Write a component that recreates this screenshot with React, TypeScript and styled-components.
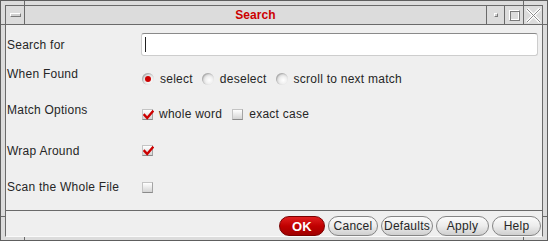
import React from "react";
import styled, { createGlobalStyle } from "styled-components";

const Global = createGlobalStyle`
  html, body { margin: 0; padding: 0; background: #dcdcdc; }
  body { font-family: "Liberation Sans", Arial, sans-serif; }
`;

const Window = styled.div`
  position: relative;
  width: 548px;
  height: 241px;
  box-sizing: border-box;
  border: 1px solid #5e5e5e;
  background: #dcdcdc;
  padding: 4px 4px 3px;
  display: flex;
`;

const Tick = styled.span<{ $x: number; $y: number; $w: number; $h: number }>`
  position: absolute;
  left: ${(p) => p.$x}px;
  top: ${(p) => p.$y}px;
  width: ${(p) => p.$w}px;
  height: ${(p) => p.$h}px;
  background: #6a6a6a;
`;

const Inner = styled.div`
  flex: 1;
  min-width: 0;
  display: flex;
  flex-direction: column;
  border: 1px solid #6a6a6a;
  border-bottom-color: #fafafa;
`;

const TitleBar = styled.div`
  height: 18px;
  display: flex;
  background: #dcdcdc;
  border-bottom: 1px solid #6a6a6a;
`;

const TitleButton = styled.div<{ $w: number; $side: "left" | "right" }>`
  width: ${(p) => p.$w}px;
  flex: none;
  display: flex;
  align-items: center;
  justify-content: center;
  ${(p) => (p.$side === "left" ? "border-right" : "border-left")}: 1px solid #6a6a6a;
`;

const MenuBar = styled.span`
  width: 9px;
  height: 2px;
  border-top: 1px solid #ffffff;
  border-left: 1px solid #ffffff;
  border-bottom: 1px solid #7a7a7a;
  border-right: 1px solid #7a7a7a;
  background: #d0d0d0;
`;

const MinDot = styled.span`
  width: 2px;
  height: 2px;
  border-top: 1px solid #ffffff;
  border-left: 1px solid #ffffff;
  border-bottom: 1px solid #7a7a7a;
  border-right: 1px solid #7a7a7a;
  background: #d0d0d0;
`;

const MaxBox = styled.span`
  width: 9px;
  height: 9px;
  border-top: 1px solid #ffffff;
  border-left: 1px solid #ffffff;
  border-bottom: 1px solid #7a7a7a;
  border-right: 1px solid #7a7a7a;
  box-shadow: inset 1px 1px 0 #7a7a7a, inset -1px -1px 0 #ffffff;
`;

const TitleText = styled.div`
  flex: 1;
  display: flex;
  align-items: center;
  justify-content: center;
  color: #cc0000;
  font-weight: bold;
  font-size: 12px;
  letter-spacing: 0.1px;
`;

const Content = styled.div`
  flex: 1;
  display: flex;
  flex-direction: column;
  background: #efefef;
`;

const Form = styled.div`
  flex: 1;
  padding: 6px 4px 0 1px;
`;

const Row = styled.div<{ $h: number }>`
  height: ${(p) => p.$h}px;
  display: grid;
  grid-template-columns: 134px 1fr;
  align-items: center;
`;

const Label = styled.div<{ $lift?: number }>`
  font-size: 12px;
  letter-spacing: 0.25px;
  color: #262626;
  margin-bottom: ${(p) => p.$lift ?? 0}px;
`;

const Field = styled.div`
  height: 23px;
  box-sizing: border-box;
  background: #ffffff;
  border: 1px solid #cdcdcd;
  border-top-color: #8a8a8a;
  border-radius: 3px;
  display: flex;
  align-items: center;
  padding-left: 3px;
`;

const Caret = styled.span`
  width: 1px;
  height: 15px;
  background: #222;
`;

const Group = styled.div<{ $gap: number }>`
  display: flex;
  align-items: center;
  gap: ${(p) => p.$gap}px;
  padding-left: 1px;
`;

const Option = styled.label`
  display: flex;
  align-items: center;
  gap: 6px;
  font-size: 12px;
  letter-spacing: 0.25px;
  color: #262626;
`;

const Radio = styled.span<{ $on?: boolean }>`
  width: 12px;
  height: 12px;
  border-radius: 50%;
  box-sizing: border-box;
  background: radial-gradient(circle at 60% 60%, #ffffff 0%, #f0f0f0 35%, #cacaca 75%, #8e8e8e 100%);
  box-shadow: inset 1px 1px 1px rgba(0, 0, 0, 0.18);
  display: flex;
  align-items: center;
  justify-content: center;
  &::after {
    content: "";
    width: 6px;
    height: 6px;
    border-radius: 50%;
    background: #cc0000;
    display: ${(p) => (p.$on ? "block" : "none")};
  }
`;

const Box = styled.span`
  position: relative;
  width: 11px;
  height: 11px;
  box-sizing: border-box;
  border: 1px solid #c4c4c4;
  border-bottom-color: #8a8a8a;
  border-right-color: #a4a4a4;
  background: linear-gradient(#ffffff, #d4d4d4);
  display: block;
  flex: none;
`;

const CheckMark = styled.svg`
  position: absolute;
  left: 0;
  top: 0;
`;

const ButtonBar = styled.div`
  height: 25px;
  border-top: 1px solid #6a6a6a;
  display: flex;
  justify-content: flex-end;
  align-items: flex-end;
  gap: 3px;
  padding-right: 1px;
`;

const Button = styled.button<{ $w: number; $primary?: boolean }>`
  width: ${(p) => p.$w}px;
  height: 20px;
  box-sizing: border-box;
  margin: 0;
  padding: 0;
  border-radius: 10px;
  border: 1px solid ${(p) => (p.$primary ? "#7a0000" : "#858585")};
  background: ${(p) =>
    p.$primary
      ? "linear-gradient(#e02020 0%, #c00000 50%, #a00000 100%)"
      : "linear-gradient(#fbfbfb 0%, #ececec 50%, #cfcfcf 100%)"};
  color: ${(p) => (p.$primary ? "#ffffff" : "#262626")};
  font-family: "Liberation Sans", Arial, sans-serif;
  font-size: ${(p) => (p.$primary ? 13 : 12)}px;
  font-weight: ${(p) => (p.$primary ? "bold" : "normal")};
  letter-spacing: 0.25px;
  display: flex;
  align-items: center;
  justify-content: center;
`;

function Check({ on }: { on?: boolean }) {
  return (
    <Box>
      {on && (
        <CheckMark width="11" height="11" viewBox="0 0 11 11">
          <path d="M1.5 5 L4.2 8 L9.6 1.6" fill="none" stroke="#cc0000" strokeWidth="2.4" strokeLinecap="square" />
        </CheckMark>
      )}
    </Box>
  );
}

function CloseGlyph() {
  return (
    <svg width="15" height="15" viewBox="0 0 15 15">
      <path d="M1 1 L14 14 M14 1 L1 14" stroke="#ffffff" strokeWidth="3" />
      <path d="M1 1 L14 14 M14 1 L1 14" stroke="#8a8a8a" strokeWidth="1" />
    </svg>
  );
}

export default function App() {
  return (
    <>
      <Global />
      <Window>
        <Tick $x={23} $y={0} $w={1} $h={4} />
        <Tick $x={522} $y={0} $w={1} $h={4} />
        <Tick $x={23} $y={236} $w={1} $h={3} />
        <Tick $x={522} $y={236} $w={1} $h={3} />
        <Tick $x={0} $y={23} $w={4} $h={1} />
        <Tick $x={542} $y={23} $w={4} $h={1} />
        <Tick $x={0} $y={215} $w={4} $h={1} />
        <Tick $x={542} $y={215} $w={4} $h={1} />
        <Inner>
          <TitleBar>
            <TitleButton $w={18} $side="left">
              <MenuBar />
            </TitleButton>
            <TitleText>Search</TitleText>
            <TitleButton $w={17} $side="right">
              <MinDot />
            </TitleButton>
            <TitleButton $w={18} $side="right">
              <MaxBox />
            </TitleButton>
            <TitleButton $w={18} $side="right">
              <CloseGlyph />
            </TitleButton>
          </TitleBar>
          <Content>
            <Form>
              <Row $h={27}>
                <Label>Search for</Label>
                <Field>
                  <Caret />
                </Field>
              </Row>
              <Row $h={42}>
                <Label $lift={10}>When Found</Label>
                <Group $gap={9}>
                  <Option>
                    <Radio $on />
                    select
                  </Option>
                  <Option>
                    <Radio />
                    deselect
                  </Option>
                  <Option>
                    <Radio />
                    scroll to next match
                  </Option>
                </Group>
              </Row>
              <Row $h={28}>
                <Label $lift={9}>Match Options</Label>
                <Group $gap={10}>
                  <Option>
                    <Check on />
                    whole word
                  </Option>
                  <Option>
                    <Check />
                    exact case
                  </Option>
                </Group>
              </Row>
              <Row $h={45}>
                <Label>Wrap Around</Label>
                <Group $gap={10}>
                  <Check on />
                </Group>
              </Row>
              <Row $h={28}>
                <Label>Scan the Whole File</Label>
                <Group $gap={10}>
                  <Check />
                </Group>
              </Row>
            </Form>
            <ButtonBar>
              <Button $w={46} $primary>OK</Button>
              <Button $w={50}>Cancel</Button>
              <Button $w={52}>Defaults</Button>
              <Button $w={53}>Apply</Button>
              <Button $w={49}>Help</Button>
            </ButtonBar>
          </Content>
        </Inner>
      </Window>
    </>
  );
}
